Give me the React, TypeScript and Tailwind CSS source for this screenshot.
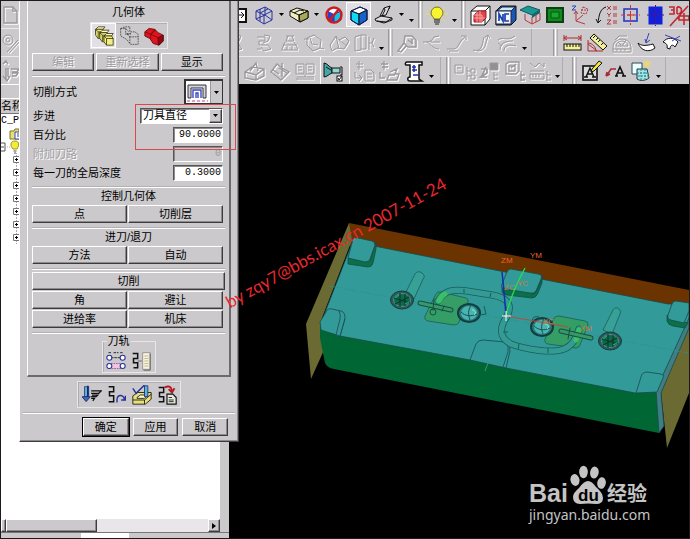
import { useState, type ReactNode } from 'react'
import clsx from 'clsx'

const RAISED = 'border border-t-white border-l-white border-r-[#3c3c3c] border-b-[#3c3c3c] shadow-[inset_-1px_-1px_0_#8c8a8c]'
const SUNKEN = 'border border-t-[#555] border-l-[#555] border-r-white border-b-white shadow-[inset_1px_1px_0_#8c8a8c]'

function Icon({ children, dim, small }: { children: ReactNode; dim?: boolean; small?: boolean }) {
  return (
    <svg viewBox="0 0 24 24" fill="none" stroke={dim ? '#9a989a' : '#111'} className={clsx('shrink-0', small ? 'h-5 w-5' : 'h-6 w-6', dim && 'drop-shadow-[1px_1px_0_#fff]')}>
      {children}
    </svg>
  )
}

const I: Record<string, ReactNode> = {
  window: <Icon><path d="M12 6h11v13H12" fill="#fff" strokeWidth="2" /><path d="M15 12h5M18 9l3 3-3 3" /></Icon>,
  wire: <Icon><path d="M4 8l9-4 7 4v9l-8 4-8-5zM4 8l8 4 8-4M12 12v9M13 4v8l7 5M13 12l-9 4M8 6v12M16 6l-8 4" stroke="#2832a0" /></Icon>,
  box: <Icon><path d="M3 8l7-3 11 3v7l-8 4-10-6z" fill="#eeecc0" /><path d="M12 12l9-4v7l-8 4z" fill="#a9a758" /><path d="M3 8l9 4 9-4M12 12v7M7 10l6-3 4 1" /></Icon>,
  noSign: <Icon><path d="M6 8l7-4 6 4v9l-7 3-6-3z" fill="#fff" stroke="none" /><path d="M12 11l7-3v9l-7 3z" fill="#19bfe0" stroke="#1a2f9e" /><path d="M6 8l6 3v9l-6-3z" fill="#2a40c8" stroke="none" /><circle cx="12" cy="12" r="7.5" stroke="#cc1c22" strokeWidth="2.4" /><path d="M17 6L7 18" stroke="#cc1c22" strokeWidth="2.4" /></Icon>,
  shaded: <Icon><path d="M4 8l9-4 7 3-8 4z" fill="#fff" /><path d="M4 8l8 3v11l-8-5z" fill="#12d8f4" /><path d="M12 11l8-4v10l-8 5z" fill="#1264c8" /><path d="M4 8l9-4 7 3v10l-8 5-8-5z" stroke="#12206a" /></Icon>,
  plane: <Icon><path d="M3 16l6-3 11 2-6 4-10-1zM5 18l7 2 8-3v-2" fill="#dedcde" /><path d="M8 13l4-8 6-2-4 9zM12 5l1 2-3 6M18 3l-1 3" fill="#dedcde" /></Icon>,
  bulb: <Icon><path d="M12 1v3M4 4l3 3M20 4l-3 3M1 11h4M23 11h-4M4 18l3-3M20 18l-3-3" stroke="#e6e05a" /><path d="M9 16c0-2-3-3-3-6a6 6 0 0 1 12 0c0 3-3 4-3 6z" fill="#f8f430" stroke="#77742a" /><path d="M9 17h6M9 19h6M10 21h4" stroke="#222" /></Icon>,
  redCube: <Icon><path d="M3 8l6-5h13v13l-5 6H3z" fill="#fff" /><path d="M3 8h14v14M17 8l5-5" /><path d="M6 12l4-4h8v7l-4 4H6z" fill="#e0444a" stroke="#b01820" /><path d="M6 12h8v7M9 9v10M6 15h11M12 8v11" stroke="#f4a4a4" /></Icon>,
  nc: <Icon><path d="M3 8l5-5h15v14l-5 5H3z" fill="#1c56b4" /><path d="M4 8l5-4h13l-4 4z" fill="#c8ecf4" stroke="#224" /><rect x="3" y="8" width="15" height="13" fill="#f2f6fa" stroke="#224" /><path d="M6 18v-7l4 7v-7M16 11h-4v7h4" stroke="#1b40b0" strokeWidth="1.7" /></Icon>,
  section: <Icon><path d="M2 7l8-4 12 4-8 5z" fill="#1b9894" stroke="#14585a" /><path d="M14 12l8-5v3l-8 5z" fill="#0d6a6a" stroke="none" /><path d="M7 11v6l7 4v-7M14 21l8-4v-7M18 11v8" stroke="#bc3640" /></Icon>,
  green: <Icon><rect x="4" y="5" width="16" height="14" fill="#0d8c1e" stroke="#123c14" strokeWidth="2" /><path d="M8 9h8v6H8z" fill="#19a72c" stroke="#0b5416" /></Icon>,
  zc: <Icon><path d="M8 18V9M8 18l9 3M8 18l7-6M8 8l-2 3M8 8l2 3" stroke="#b63840" /><path d="M4 3h4L4 7h4" stroke="#2a44b8" /><path d="M15 4l5 2-2 5-5-1zM13 7l7 0" stroke="#b63840" strokeDasharray="2 1" /></Icon>,
  xyz: <Icon><path d="M13 4C7 6 6 12 5 20M5 20l-2-4M5 20l3-3" /><path d="M14 3l4 4M18 3l-4 4M20 4h4M20 6h4M14 10l2 2 2-2M16 12v2M20 11h4M20 13h4M14 17h4l-4 4h4M20 18h4M20 20h4" stroke="#b63840" /></Icon>,
  target: <Icon><rect x="6" y="6" width="13" height="12" stroke="#2b38c4" strokeWidth="1.6" /><path d="M12.500 2v20M3 12h19" stroke="#c83540" strokeDasharray="4 2" /><path d="M9 12h7M12.500 9v6" stroke="#c83540" /></Icon>,
  blue: <Icon><rect x="6" y="4" width="13" height="17" fill="#1320d8" stroke="#1320d8" /><path d="M12.500 2v21M4 12h17" stroke="#4a1a80" strokeDasharray="3 2" /></Icon>,
  threeD: <Icon><path d="M2 4h5v3H4h3v4H2M10 4v7M10 4c6-1 6 7 0 7M21 3L3 23M12 17h10v-4H12zM17 10v12" stroke="#c22832" strokeWidth="1.6" /></Icon>,
  ruler: <Icon><path d="M4 4v6M21 4v6M4 7h17M7 5L4 7l3 2M18 5l3 2-3 2" stroke="#b22a34" /><rect x="4" y="13" width="17" height="6" fill="#f4f09a" /><path d="M7 13v3M10 13v3M13 13v3M16 13v3M19 13v3" /></Icon>,
  angle: <Icon><path d="M3 9v11h15M3 13l9 7M3 12c4 0 8 4 8 8" stroke="#b22a34" /><path d="M5 7l4-4 13 12-4 4z" fill="#f4f09a" /><path d="M10 5l-2 2M13 7l-2 2M15 9l-2 2M18 12l-2 2" /></Icon>,
  curveIn: <Icon><path d="M3 12c3 3 8 3 15 1l2 4c-6 5-14 3-17-5z" fill="#fff" /><path d="M14 2l-3 9M11 12l-1-4M11 12l4-3" stroke="#3945b0" /></Icon>,
  curveTop: <Icon><path d="M3 11c4-5 11-5 15 0l-3 5c-2-3-5-2-5 2l-3-1c1-3-1-5-4-6z" fill="#fff" /><path d="M5 4l16 6M20 5L12 10" stroke="#3945b0" /></Icon>,
  machine: <Icon><path d="M2 4c3 0 5 4 8 5v5c-3 1-5 4-8 4z" fill="#46a6a4" /><path d="M10 9h8v5h-8z" fill="#8cd8d2" /><path d="M18 8h2v8h-2M4 8l5 3" /><rect x="15" y="17" width="5" height="5" fill="#fff" /><path d="M16 19l1 2 3-4" /></Icon>,
  report: <Icon><path d="M5 3h15v3h-3v14l3 2H8c-3 0-3-4 0-4V6H4c-1 0-1-3 1-3z" fill="#fff" strokeWidth="1.500" /><path d="M10 8h4M12 6v7M10 11h5M11 16h6" stroke="#2434a6" strokeWidth="1.6" /></Icon>,
  editText: <Icon><rect x="4" y="7" width="14" height="14" fill="#dcdcdc" strokeWidth="1.600" /><path d="M7 18l4-9 4 9M8 15h6M5 18h4M13 18h4" strokeWidth="1.500" /><path d="M13 10l7-8 3 2-8 8-3 1z" fill="#f0e840" /></Icon>,
  label: <Icon><path d="M12 10H7l-4 6M2 17l1-4M2 17l4-2" stroke="#a82a34" strokeWidth="1.500" /><path d="M12 17l4-9 4 9M14 14h5M11 17h3M18 17h4" strokeWidth="1.6" /></Icon>,
  layers: <Icon><path d="M3 4h10v11H3z" fill="#eaffff" stroke="#345" /><path d="M8 10h10l2 9c-4 3-9 3-12 1z" fill="#a4e4e4" stroke="#234" /><path d="M8 14h12M9 17h11M12 10v11M16 10v10" stroke="#2c8c92" strokeDasharray="2 1" /><path d="M18 1v8M14 5h8M15 2l6 6M21 2l-6 6" stroke="#f2e24a" /></Icon>,
  // disabled tools
  spring: <Icon dim><path d="M5 6h8v4H7v4h9M9 18H5M12 4l6 1-2 5-5 2M16 14l3 4-7 2-3-4" /></Icon>,
  hat: <Icon dim><path d="M9 5h8M11 5l-2 5h8l-2-5M6 14h14M4 19h17M8 11l-3 7M17 11l4 7M10 15v4M15 15v4" /></Icon>,
  wheel: <Icon dim><path d="M5 7l7-3 7 5-1 8-7 3-6-6zM8 7l2 6 6 1M2 8h5M18 17l4 1" /></Icon>,
  sheets: <Icon dim><path d="M3 14l6-9 3 4 6-3 4 4-5 8-7-1-5 3zM9 5l3 13M12 9l8 6" /></Icon>,
  panels: <Icon dim><path d="M3 6l6-2v15l-6 1zM9 4h5v14H9M17 6v13M22 7l-2 5 2 4M17 12h3" /></Icon>,
  key: <Icon dim><path d="M9 12L3 20l3 1 6-7M10 5h7l4 4v7h-8l-4-4zM13 9l5 4M17 8v5" strokeWidth="1.500" /></Icon>,
  branch: <Icon dim><path d="M3 11c7 0 8 0 11-5l5-1M7 11c5 4 7 7 12 7M10 11h10" /></Icon>,
  curveDn: <Icon dim><path d="M2 18h6c6 0 5-7 12-12M4 20h9M16 5h5v4" /></Icon>,
  curveS: <Icon dim><path d="M3 19c8 2 9-3 11-13M7 20c9 0 8-7 11-15M15 6l3-2 2 3" /></Icon>,
  curveN: <Icon dim><path d="M3 9c5-4 9 2 17-4M5 19c0-6 4-9 13-9M9 20c0-5 4-7 12-5M3 12l4 3" /></Icon>,
  protractor: <Icon dim><path d="M3 16a9 8 0 0 1 18 0v5H3zM6 15a6 5 0 0 1 12 0zM8 11l3 3M16 9l-4 6M3 18h18M7 18v2M11 18v2M15 18v2M5 9l4-4h8" /></Icon>,
  block: <Icon dim><path d="M2 13l7-5 12 2v7l-8 4-11-2zM2 13l11 3 8-6M13 16v5M7 12l6-8 2 8" strokeWidth="1.400" /></Icon>,
  check: <Icon dim><path d="M3 13l6-8 5 4 7 4-8 8zM5 11l6 4M14 4v14M11 9l8 5" strokeWidth="1.400" /></Icon>,
  book: <Icon dim><path d="M3 5h8v10H3zM13 5h8v10h-8zM5 8h4M15 8h4M5 11h4M15 11h4M4 18h8v-3M12 18h9M3 20h18" /></Icon>,
  importA: <Icon dim><path d="M4 5h7M7 2v9M5 8h6M3 13v6h6M7 16l3 3-3 3M13 11h6l3 3v8h-9zM15 15h5M15 18h5" /></Icon>,
  importB: <Icon dim><path d="M4 5h7M7 2v9M5 8h6M3 13v6h5M13 13l7-3-2 5h4l-2 6H10l2-5h6" strokeWidth="1.300" /></Icon>,
  treeA: <Icon dim><path d="M2 6h8v8H2zM4 9h4M14 8v13M14 12h4M14 17h4M18 10h4v4h-4zM18 16h4v4h-4z" /></Icon>,
  treeB: <Icon dim><path d="M3 10h6v4l-6 4h6M3 19l5-11" strokeWidth="1.700" /><path d="M12 4h8v7h-8z" fill="#929092" /><path d="M16 13v8M16 16h4M16 20h4" /></Icon>,
  treeC: <Icon dim><path d="M3 5l3-2h10v9l-3 3H3zM6 7h6v5H6zM8 9l5-4M18 12v10M18 16h4M18 21h4" strokeWidth="1.300" /></Icon>,
  treeD: <Icon dim><path d="M2 4l5 4 4-4 5 4V4M2 12h14M2 15h14v5H2zM5 15v3M8 15v3M11 15v3M19 12v10M19 16h4M19 21h4" /></Icon>,
  doc: <Icon dim><path d="M3 4h9l4 4v12H3zM12 4v4h4" strokeWidth="1.400" /></Icon>,
  gearLine: <Icon dim><circle cx="7" cy="9" r="5" /><circle cx="7" cy="9" r="2" /><path d="M17 9L6 21M19 10L8 22" /></Icon>,
  drill: <Icon dim><path d="M2 5l3-3 2 3M5 9v11M7 9v9M2 17l4 5 3-5M10 10h8l-2 3h-5M11 14h6l-2 3h-4" strokeWidth="1.500" /></Icon>,
  // geometry + path tools
  yellowBlocks: (
    <Icon small>
      {[0, 5, 10].map((d) => (
        <g key={d} transform={`translate(${d} ${d * 0.8})`} stroke="#3c3a14">
          <path d="M2 4l3-3h8l-2 3z" fill="#fffcc0" />
          <path d="M2 4l2 8-2-3z" fill="#a8a440" />
          <path d="M2 4h9l2 3v8H5l-3-4z" fill="#f2ee80" />
          <path d="M5 7h8M5 7v8M5 7L2 4" />
        </g>
      ))}
    </Icon>
  ),
  dashedBlocks: <Icon small><path d="M2 3l5-2h6v6h6l4 3v12h-9l-5-6-7-4zM2 3h6l4 4M8 3v7h6M13 13h10M13 13v9M13 13L9 9h6" strokeDasharray="2 1" stroke="#444" /></Icon>,
  redBlock: <Icon small><path d="M1 7l5-4 7 1 4 4 6 3v7l-5 5-7-2-4-6-6-3z" fill="#e0141c" stroke="#5a080c" /><path d="M17 14l6-3v7l-5 5z" fill="#8c0c12" stroke="#5a080c" /><path d="M1 7l7 3 5-6M8 10v5M8 10l9 4v8M8 10l6-5" stroke="#7a0a10" /></Icon>,
  pocket: <Icon><path d="M2 5h18v13h-3V8H5v10H2z" fill="#d4d2d4" stroke="#334" /><path d="M7 18V10h8v8M10 18v-5h2v5" stroke="#3b48c4" strokeWidth="1.400" /><path d="M1 21h21" stroke="#c04488" strokeDasharray="3 2" /></Icon>,
  pathShow: <Icon small><path d="M3 2h4M9 2h6M17 2h4M6 8h12" strokeDasharray="3 1" /><path d="M6 15h12v6H6z" fill="#f2c4e2" stroke="#8a5a8a" strokeDasharray="2 1" /><g fill="#fff" stroke="#27309c" strokeWidth="1.300"><circle cx="4" cy="8" r="3" /><circle cx="20" cy="8" r="3" /><circle cx="4" cy="18" r="3" /><circle cx="20" cy="18" r="3" /></g></Icon>,
  pathList: <Icon small><path d="M2 3h6v6H3v5h5v6H3" strokeWidth="1.800" /><path d="M8 12h5" stroke="#556" /><path d="M14 2h9v20h-9z" fill="#f6f2dc" stroke="#888" /><path d="M16 6h5M16 9h5M16 12h5M16 15h5M16 18h5" stroke="#b4ae88" /><path d="M23 3v20h-8" stroke="#555" /></Icon>,
  generate: <Icon small><path d="M3 2h5v12H3z" fill="#58b4d4" stroke="#263a7c" /><path d="M7 1v14" stroke="#1c2674" strokeWidth="2" /><path d="M0 14l5 6 5-6z" fill="#3b6cb4" stroke="#1c2674" /><path d="M11 7h12l-3 3h-9M12 12h7l-2 2h-6M11 16h4l-2 3" strokeWidth="1.500" /></Icon>,
  replay: <Icon small><path d="M2 2h6v6H3v5h5v7H2M3 8h5" strokeWidth="1.800" /><path d="M12 21v-4c1-6 8-6 9 1M17 18h5v-5" stroke="#27309c" strokeWidth="1.600" /></Icon>,
  verify: <Icon small><path d="M1 13l6-4h16v8l-7 6H1z" fill="#e8e078" /><path d="M6 15l4-3h9l-4 4H6z" fill="#fffde0" /><path d="M1 18h14l8-7M15 18v5" /><path d="M15 1h4v13h-4z" fill="#5cb8d4" stroke="#1c2674" /><path d="M1 4l4 6L15 0" stroke="#27309c" strokeWidth="1.700" /></Icon>,
  listPath: <Icon small><path d="M2 3h6v6H3v5h5v6H2" strokeWidth="1.800" /><path d="M9 3c6-3 9 0 9 5M14 5l4 4 3-5" stroke="#b41820" strokeWidth="2.200" /><path d="M12 11h7l4 4v8H12z" fill="#e2ecdc" strokeWidth="1.400" /><path d="M14 15h4M14 18h6M14 20h6" /></Icon>,
}

function Tool({ name, pressed, label }: { name: string; pressed?: boolean; label?: string }) {
  return (
    <button type="button" aria-label={label ?? name} className={clsx('flex h-[25px] w-[25px] shrink-0 items-center justify-center overflow-hidden', pressed && 'border border-white bg-[#e2e0e4]')}>
      {I[name]}
    </button>
  )
}

function Caret({ low }: { low?: boolean }) {
  return (
    <span className={clsx('flex w-[10px] shrink-0 justify-center', low && 'pt-3')}>
      <svg viewBox="0 0 5 3" className="h-[3px] w-[5px]"><path d="M0 0h5L2.500 3z" fill="#000" /></svg>
    </span>
  )
}

function Grip() {
  return (
    <span className="flex h-full w-2 shrink-0 justify-center gap-px">
      <span className="w-px bg-[#9b999b]" />
      <span className="w-px bg-white" />
      <span className="w-px bg-[#b3b1b3]" />
    </span>
  )
}

const tools = (names: string[]) => names.map((n) => <Tool key={n} name={n} />)

function Toolbars() {
  return (
    <div className="flex flex-col gap-px overflow-hidden bg-[#eceaec] pl-[10px]">
      <div className="flex h-[27px] items-center bg-[#cbc9cb]">
        <span className="flex w-3 shrink-0 justify-end overflow-hidden pr-1">{I.window}</span>
        <Tool name="wire" /><Caret />
        <Tool name="box" /><Caret />
        <Tool name="noSign" /><Tool name="shaded" pressed /><Tool name="plane" /><Caret /><Caret low />
        <Grip />
        <Tool name="bulb" /><Caret low />
        <Grip />
        {tools(['redCube', 'nc', 'section', 'green', 'zc', 'xyz', 'target', 'blue'])}
        <span className="overflow-hidden">{I.threeD}</span>
      </div>
      <div className="flex h-[27px] items-center bg-[#cbc9cb]">
        <span className="flex w-3 shrink-0 justify-end overflow-hidden pr-1">{I.spring}</span>
        {tools(['spring', 'hat', 'wheel', 'sheets', 'panels'])}
        <Caret low />
        <Grip />
        {tools(['key', 'branch', 'curveDn', 'curveS', 'curveN'])}
        <Caret low />
        <span className="ml-0.5 h-full w-5 shrink-0 border-l border-[#aeacae]" />
        <Grip />
        {tools(['ruler', 'angle', 'protractor', 'curveIn', 'curveTop'])}
      </div>
      <div className="flex h-[27px] items-center bg-[#cbc9cb] pl-[3px]">
        {tools(['block', 'check', 'book'])}
        <span className="h-full w-1 shrink-0 border-r border-white" />
        <Tool name="machine" />
        <span className="mr-px h-full w-1 shrink-0 border-r border-white" />
        {tools(['importA', 'importB', 'report'])}
        <Caret low />
        <span className="ml-1 h-full w-1 shrink-0 border-l border-[#aeacae]" />
        <Grip />
        {tools(['treeA', 'treeB', 'treeC', 'treeD'])}
        <Caret low />
        <span className="h-full w-2 shrink-0 border-l border-[#aeacae]" />
        <Grip />
        {tools(['editText', 'label', 'layers'])}
        <Caret low />
        <span className="ml-0.5 h-full flex-1 border-l border-[#aeacae]" />
      </div>
    </div>
  )
}

function Navigator() {
  return (
    <aside className="flex w-[228px] shrink-0 flex-col bg-[#cbc9cb]">
      <div className="flex flex-col gap-px bg-[#eceaec]">
        {['doc', 'gearLine', 'drill'].map((n) => (
          <div key={n} className="flex h-[27px] items-center bg-[#cbc9cb]">{I[n]}</div>
        ))}
      </div>
      <div className="h-[15px] border-y border-white" />
      <div className="mr-[9px] flex flex-1 flex-col bg-white">
        <div className="h-[15px] border-b border-[#777] bg-[#cbc9cb] text-[11px] leading-[14px]">名称</div>
        <div className="h-[13px] font-['Liberation_Mono','Noto_Sans_CJK_SC',monospace] text-[10px] leading-[13px]">C_P</div>
        <ul>
          <li className="flex h-[13px] items-center pl-2">
            <svg viewBox="0 0 14 12" className="h-3 w-3.5"><path d="M1 3h4l1-2h4v10H1z" fill="#e8e070" stroke="#77742a" /><path d="M6 4h8v7H6zM8 6h5M8 8h5" fill="#fff" stroke="#3945b0" /></svg>
          </li>
          <li className="flex h-[13px] items-center">
            <svg viewBox="0 0 20 14" className="h-3.5 w-5"><path d="M0 3h4v8H0M0 7h3" fill="#fff" stroke="#555" /><path d="M4 7h5" stroke="#aaa" strokeDasharray="1 1" /><path d="M12 9c-3-3-3-8 2-8s4 5 2 8z" fill="#f4ec38" stroke="#9c9620" /><path d="M12.500 11h3M13 13h2" stroke="#555" /></svg>
          </li>
          {[1, 2, 3, 4, 5, 6, 7].map((n) => (
            <li key={n} className="flex h-[13px] items-center pl-3">
              <svg viewBox="0 0 8 13" className="h-[13px] w-2"><path d="M3.500 0v13" stroke="#aaa" strokeDasharray="1 1" /><path d="M.5 3.500h6v6h-6z" fill="#fff" stroke="#777" /><path d="M2 6.500h3M3.500 5v3" stroke="#000" /></svg>
            </li>
          ))}
        </ul>
        <div className="mt-auto flex h-[13px] bg-[#e8e6e8]">
          <span className={clsx('w-[5px] bg-[#cbc9cb]', RAISED)} />
          <span className={clsx('w-[91px] bg-[#cbc9cb]', RAISED)} />
          <span className="flex-1" />
          <button type="button" aria-label="right" className={clsx('flex w-3 items-center justify-center bg-[#cbc9cb]', RAISED)}>
            <svg viewBox="0 0 4 6" className="h-1.5 w-1"><path d="M0 0l4 3-4 3z" /></svg>
          </button>
        </div>
      </div>
      <div className="h-1.5 border-t border-[#777]">
        <div className="ml-20 h-full w-12 bg-white" />
      </div>
    </aside>
  )
}

function Btn({ children, disabled, strong }: { children: ReactNode; disabled?: boolean; strong?: boolean }) {
  return (
    <button type="button" disabled={disabled} className={clsx('h-[18px] flex-1 bg-[#cbc9cb] text-[11px] leading-[14px]', RAISED, disabled && 'text-[#9c9a9c] [text-shadow:1px_1px_0_#fff]', strong && 'outline outline-black')}>
      {children}
    </button>
  )
}

const Rule = () => <hr className="mt-1 h-0.5 border-t border-b border-t-[#b3b1b3] border-b-white" />
const Title = ({ children }: { children: ReactNode }) => <h2 className="mt-px h-3.5 text-center text-[11px] leading-[14px]">{children}</h2>

function Field({ id, label, value, disabled }: { id: string; label: string; value: string; disabled?: boolean }) {
  return (
    <div className="flex h-[19px] items-center justify-between pr-0.5">
      <label htmlFor={id} className={clsx('pl-px', disabled && 'text-[#a3a1a3] [text-shadow:1px_1px_0_#fff]')}>{label}</label>
      <input id={id} defaultValue={value} disabled={disabled} className={clsx('h-4 w-[50px] px-px text-right font-["Liberation_Mono",monospace] text-[10px]', SUNKEN, disabled ? 'bg-[#cbc9cb] text-[#9c9a9c]' : 'bg-white')} />
    </div>
  )
}

function OperationDialog() {
  const [step, setStep] = useState('刀具直径')

  return (
    <section className="absolute top-0 left-[18px] z-10 w-[220px] border-r border-b border-l border-l-white border-r-[#3c3c3c] border-b-[#3c3c3c] bg-[#cbc9cb] px-[7px] pb-[5px] text-[11px] leading-[14px] shadow-[inset_-1px_-1px_0_#8c8a8c]">
      <div className="border-r-2 border-b-2 border-l border-l-white border-r-[#6c6a6c] border-b-[#6c6a6c] px-1 pt-[3px] pb-0.5">
        <Title>几何体</Title>
        <div className="mx-auto mt-[3px] flex h-[27px] w-[78px] items-center justify-center border border-[#e8e6e8] shadow-[inset_1px_1px_0_#b0aeb0]">
          <Tool name="yellowBlocks" label="部件" pressed />
          <Tool name="dashedBlocks" label="毛坯" />
          <Tool name="redBlock" label="检查" />
        </div>
        <div className="mt-1 flex gap-0.5 pr-0.5">
          <Btn disabled>编辑</Btn>
          <Btn disabled>重新选择</Btn>
          <Btn>显示</Btn>
        </div>
        <Rule />

        <div className="mt-0.5 flex h-[25px] items-center justify-between pr-0.5">
          <span className="pl-px">切削方式</span>
          <button type="button" aria-label="切削方式" className="flex h-[25px] w-[39px] items-center border border-t-2 border-l-2 border-[#333] bg-white">
            {I.pocket}
            <span className="flex h-full flex-1 items-center justify-center border-l border-[#999] bg-[#cbc9cb]"><Caret /></span>
          </button>
        </div>

        <div className="relative mt-0.5">
          <div className="flex h-[19px] items-center justify-between pr-0.5">
            <label htmlFor="step" className="pl-px">步进</label>
            <div className={clsx('relative h-4 w-[83px] bg-white', SUNKEN)}>
              <select id="step" value={step} onChange={(e) => setStep(e.target.value)} className="block h-full w-full appearance-none pl-0.5 text-[11px] leading-[13px]">
                <option>刀具直径</option>
                <option>恒定</option>
              </select>
              <span className={clsx('pointer-events-none absolute inset-y-0 right-0 flex w-[13px] items-center justify-center bg-[#cbc9cb]', RAISED)}><Caret /></span>
            </div>
          </div>
          <Field id="percent" label="百分比" value="90.0000" />
          <Field id="extra" label="附加刀路" value="0" disabled />
          <Field id="depth" label="每一刀的全局深度" value="0.3000" />
          <div className="pointer-events-none absolute -top-0.5 -right-[11px] h-[46px] w-[101px] border border-[#d8484c]" />
        </div>

        <Rule />
        <Title>控制几何体</Title>
        <div className="mt-0.5 flex gap-px pr-0.5">
          <Btn>点</Btn>
          <Btn>切削层</Btn>
        </div>
        <Rule />
        <Title>进刀/退刀</Title>
        <div className="mt-0.5 flex gap-px pr-0.5">
          <Btn>方法</Btn>
          <Btn>自动</Btn>
        </div>
        <Rule />

        <div className="mt-0.5 flex flex-col gap-px">
          <div className="flex"><Btn>切削</Btn></div>
          <div className="flex gap-px pr-0.5"><Btn>角</Btn><Btn>避让</Btn></div>
          <div className="flex gap-px pr-0.5"><Btn>进给率</Btn><Btn>机床</Btn></div>
        </div>
        <Rule />

        <fieldset className="mx-auto h-[39px] w-[54px] border border-[#e8e6e8] shadow-[inset_1px_0_0_#b0aeb0]">
          <legend className="ml-1 h-3.5 px-px">刀轨</legend>
          <div className="flex justify-center">
            <Tool name="pathShow" label="显示刀轨" />
            <Tool name="pathList" label="刀轨选项" />
          </div>
        </fieldset>
      </div>

      <div className="mx-auto mt-1 flex h-[27px] w-[104px] items-center justify-center border border-[#e8e6e8] shadow-[inset_1px_1px_0_#b0aeb0]">
        <Tool name="generate" label="生成" />
        <Tool name="replay" label="重播" />
        <Tool name="verify" label="确认" />
        <Tool name="listPath" label="列表" />
      </div>
      <div className="-mx-1"><Rule /></div>
      <div className="mt-1 mr-[3px] ml-14 flex gap-1">
        <Btn strong>确定</Btn>
        <Btn>应用</Btn>
        <Btn>取消</Btn>
      </div>
    </section>
  )
}

function Hole({ x, y }: { x: number; y: number }) {
  return (
    <g transform={`translate(${x} ${y})`}>
      <ellipse rx="11.500" ry="9" fill="#285a58" stroke="#173c3c" />
      <ellipse rx="8.500" ry="6.500" fill="#0c6a48" stroke="#588c8c" />
      <path d="M-8-2L8 3M-2-7v14M3-6v12M-7 4l14-7" stroke="#0a332c" />
      <path d="M-7-2l4-3M3 4l4-2" stroke="#30b080" />
    </g>
  )
}

function Insert({ x, y }: { x: number; y: number }) {
  return (
    <g transform={`translate(${x} ${y})`}>
      <ellipse rx="11" ry="9" fill="#257a7a" stroke="#153c3e" strokeWidth="2" />
      <ellipse rx="8" ry="7" fill="#49b5b0" stroke="none" />
      <path d="M-8-1c4 4 10 5 16 2M2-8c-3 5-3 10-1 15" stroke="#194c50" />
      <path d="M3-3c4 0 4 4 2 5" stroke="#9ce4d8" />
    </g>
  )
}

function Viewport() {
  return (
    <svg viewBox="229 84 460 454" preserveAspectRatio="xMinYMin meet" fill="none" className="min-h-0 w-full flex-1 bg-black">
      <path d="M349 223L689 290V312L350 246z" fill="#6b3300" />
      <path d="M349 223L352 240 322 318 324 350 311 379 306 324z" fill="#6b6a33" />
      <path d="M661 392L689 316V393L667 448z" fill="#6b6a33" />
      <path d="M320 322V338L325 363Q327 368 334 369L659 433 661 392 505 360z" fill="#006734" />
      <g stroke="#174b4b" strokeWidth=".8">
        <path d="M354 238L374 246 490 269 668 304 689 304V324L661 392 635 393 506 368 470 360 340 336 321 328 324 315z" fill="#339a9a" />
        <path d="M656 390L689 318V328L661 393 664 426 659 433z" fill="#3f7f84" />
        {/* corner pads */}
        <path d="M348 258v6l20 3q4 0 5-4l3-14v-7l-6 19z" fill="#0a7048" />
        <path d="M353 239q1-2 5-1l14 3q3 1 3 4l-5 14q-1 3-5 3l-17-4z" fill="#339a9a" />
        <path d="M345 319l-5 17-4 1 3-19z" fill="#287c7c" />
        <path d="M320 322l6-10q1-4 6-3l9 2q4 1 4 7l-5 18-19-6z" fill="#339a9a" />
        <path d="M339 311q2 3 1 8l-4 16" />
        <path d="M502 286v6q1 3 5 3l25 3q4 0 6-5l4-10v-8l-9 18z" fill="#0a7048" />
        <path d="M507 272q1-3 4-3l27 5q5 1 3 5l-5 12q-2 3-6 2l-25-4q-5-1-3-5z" fill="#339a9a" />
        <path d="M543 277l-6 13q-2 5-6 4" />
        <path d="M470 360l6-16q2-4 7-4l22 2q5 1 5 9l-4 17z" fill="#339a9a" />
        <path d="M506 343q3 3 2 9l-5 15" />
        <path d="M667 315v6q1 4 6 5l12 2 3-5-15-4z" fill="#0a7048" />
        <path d="M689 303l-13-2q-3 0-4 3l-4 11q-1 4 3 5l13 3 5-12z" fill="#339a9a" />
        <path d="M636 393l5-16q1-5 6-5l14 2q4 1 2 4l-6 14z" fill="#339a9a" />
      </g>
      <path d="M330 286l358 67" stroke="#2f9188" strokeWidth=".7" strokeDasharray="12 3" />
      <g stroke="#1b5c54" strokeWidth=".8">
        <path d="M405 294l10-20q3-4 7-1t1 6l-9 20zM603 330l10-20q3-4 6-1t1 5l-8 20z" fill="#37a198" />
        <path d="M436 294q1-3 5-2l25 6q3 1 2 4l-9 20q-1 3-5 3l-26-4q-4-1-3-5zM554 318q2-2 5-2l26 5q4 1 3 4l-8 20q-1 3-4 3l-28-4q-4-1-3-5z" fill="#359d66" />
      </g>
      <path d="M438 301C444 290 454 289 467 291L492 295C510 298 512 307 507 316 500 327 498 337 511 344 524 349 552 354 564 349 574 345 576 337 579 329" stroke="#1a5c5a" strokeWidth="7" strokeLinecap="round" />
      <path d="M438 301C444 290 454 289 467 291L492 295C510 298 512 307 507 316 500 327 498 337 511 344 524 349 552 354 564 349 574 345 576 337 579 329" stroke="#339a94" strokeWidth="5.500" strokeLinecap="round" />
      <path d="M439 301q2-5 6-7M576 340q2-4 3-10" stroke="#3cc064" strokeWidth="5" strokeLinecap="round" />
      <path d="M464 289v4M491 293l-1 4M519 344l-1 6M548 348v5M503 332h5" stroke="#1a5c5a" />
      <g strokeLinecap="round">
        <path d="M420 303l31 7M561 331l30 7" stroke="#155040" strokeWidth="5" />
        <path d="M420 303l31 7M561 331l30 7" stroke="#37986a" strokeWidth="3" />
        <path d="M434 299l-1 11M570 328l-2 11M444 306l-2 5" stroke="#155040" />
      </g>
      <circle cx="433" cy="312" r="3" stroke="#155040" />
      <Hole x={402} y={300} />
      <Hole x={610} y={341} />
      <Insert x={469} y={313} />
      <Insert x={542} y={327} />
      <path d="M484 306l2 8-7 1M532 321q1-6 7-4" stroke="#1a5c5a" />
      <path d="M506 316Q504 290 502 272" stroke="#1230b0" strokeWidth="1.500" />
      <path d="M506 316Q510 296 525 268" stroke="#24e24a" strokeWidth="1.300" />
      <path d="M506 316L568 327" stroke="#b84a3c" />
      <path d="M502 316h9M506 311v10" stroke="#fff" />
      <path d="M488 363l-3 8" stroke="#369a72" />
      <g fill="#e8652c" fontSize="8" fontFamily="Liberation Sans, Arial, sans-serif">
        <text x="501" y="263">ZM</text>
        <text x="530" y="258">YM</text>
        <g fill="#c87c38">
          <text x="504" y="290">ZC</text>
          <text x="517" y="286">YC</text>
          <text x="543" y="324">XC</text>
          <text x="580" y="331">XM</text>
        </g>
      </g>

      <g fill="#c4c4c4">
        <text x="529" y="502" fontSize="25" fontWeight="700" fontFamily="Liberation Sans, Arial, sans-serif">Bai</text>
        <ellipse cx="575" cy="480" rx="4.500" ry="6" transform="rotate(-12 575 480)" />
        <ellipse cx="583.500" cy="472" rx="4.300" ry="6.200" />
        <ellipse cx="594.500" cy="472.500" rx="4.300" ry="6" transform="rotate(10 594 472)" />
        <ellipse cx="601.500" cy="483" rx="4.300" ry="5.800" transform="rotate(10 601 483)" />
        <path d="M588 481q4 0 8 6 7 6 7 11 0 6-7 6-8-1-16 0-7 0-7-7 0-4 6-9 5-7 9-7z" />
        <text x="578" y="501" fontSize="17" fontWeight="700" fill="#000" fontFamily="Liberation Sans, Arial, sans-serif">du</text>
        <text x="607" y="501" fontSize="20" fontWeight="700" fontFamily="Noto Sans CJK SC, sans-serif">经验</text>
        <text x="529" y="520" fontSize="14" fontFamily="Noto Sans, sans-serif">jingyan.baidu.com</text>
      </g>
    </svg>
  )
}

export default function App() {
  return (
    <main className="relative flex h-screen overflow-hidden border border-[#1c1a1c] bg-[#cbc9cb] font-['Liberation_Sans','Noto_Sans_CJK_SC',sans-serif] text-black">
      <Navigator />
      <div className="flex min-w-0 flex-1 flex-col">
        <Toolbars />
        <Viewport />
      </div>
      <OperationDialog />
      <p className="pointer-events-none absolute top-[291px] left-[231px] z-20 origin-bottom-left -rotate-[29deg] font-['Lato',sans-serif] text-[17px] leading-5 whitespace-nowrap text-[#e8282e]">
        by zqy7@bbs.icax.cn 2007-11-24
      </p>
    </main>
  )
}
